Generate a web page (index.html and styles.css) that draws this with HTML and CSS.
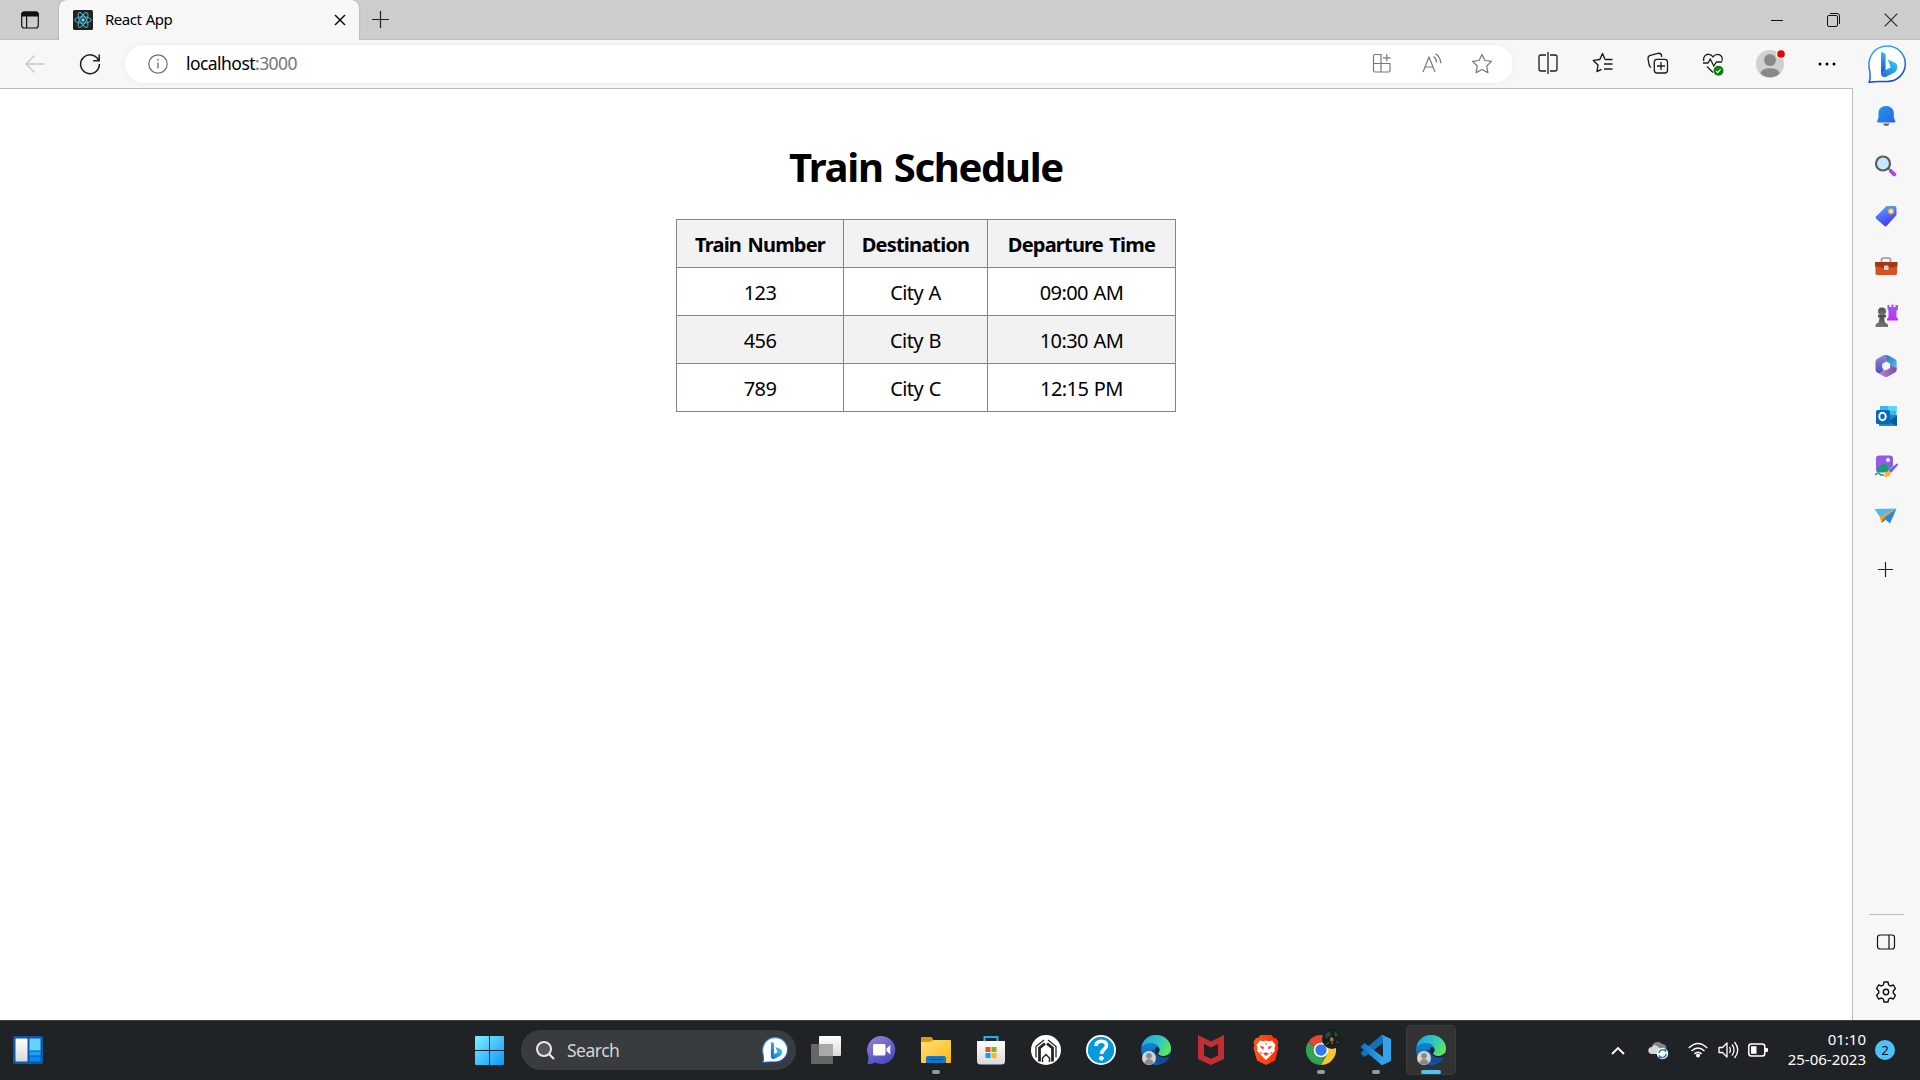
FILE: index.html
```html
<!DOCTYPE html>
<html lang="en">
<head>
<meta charset="utf-8">
<title>React App</title>
<link rel="stylesheet" href="styles.css">
</head>
<body>
<svg class="defs" width="0" height="0" aria-hidden="true">
  <defs>
    <linearGradient id="bingRing" x1="0" y1="0" x2="0.3" y2="1"><stop offset="0" stop-color="#2ab4f0"/><stop offset=".5" stop-color="#2b86ea"/><stop offset="1" stop-color="#1a49c8"/></linearGradient>
    <linearGradient id="bingStem" x1="0" y1="0" x2="0" y2="1"><stop offset="0" stop-color="#37b5f5"/><stop offset="1" stop-color="#1b4fd6"/></linearGradient>
    <linearGradient id="bingBowl" x1="1" y1="0" x2="0" y2="1"><stop offset="0" stop-color="#2fd6e8"/><stop offset="1" stop-color="#2065e0"/></linearGradient>
    <linearGradient id="blue" x1="0" y1="0" x2="1" y2="1"><stop offset="0" stop-color="#1b9de2"/><stop offset="1" stop-color="#2f62e8"/></linearGradient>
    <linearGradient id="tag" x1="0" y1="0" x2=".4" y2="1"><stop offset="0" stop-color="#5eb0ff"/><stop offset="1" stop-color="#4338f5"/></linearGradient>
    <linearGradient id="purple" x1="0" y1="0" x2="0" y2="1"><stop offset="0" stop-color="#a05cf0"/><stop offset="1" stop-color="#c32cf0"/></linearGradient>
    <linearGradient id="grey" x1="0" y1="0" x2="0" y2="1"><stop offset="0" stop-color="#4c4c4c"/><stop offset="1" stop-color="#777"/></linearGradient>
    <linearGradient id="win" gradientUnits="userSpaceOnUse" x1="0" y1="0" x2="29" y2="29"><stop offset="0" stop-color="#7df0ff"/><stop offset="1" stop-color="#0b98fa"/></linearGradient>
    <linearGradient id="folder" x1="0" y1="0" x2="1" y2="1"><stop offset="0" stop-color="#ffe07a"/><stop offset="1" stop-color="#fdb813"/></linearGradient>
    <linearGradient id="chat" x1="0" y1="0" x2=".6" y2="1"><stop offset="0" stop-color="#a583cf"/><stop offset=".5" stop-color="#6f66cf"/><stop offset="1" stop-color="#4a4fc2"/></linearGradient>
    <linearGradient id="edgeTop" x1="0" y1=".3" x2="1" y2=".7"><stop offset="0" stop-color="#1fa6de"/><stop offset=".5" stop-color="#2fc6c4"/><stop offset="1" stop-color="#63ea52"/></linearGradient>
    <linearGradient id="edgeMid" x1="0" y1="0" x2="0" y2="1"><stop offset="0" stop-color="#1391e0"/><stop offset="1" stop-color="#0b5cb8"/></linearGradient>
    <linearGradient id="brave" x1="0" y1="0" x2="1" y2="0"><stop offset="0" stop-color="#ff5a1c"/><stop offset="1" stop-color="#ff2a00"/></linearGradient>
    <linearGradient id="code" x1="0" y1="0" x2="1" y2="0"><stop offset="0" stop-color="#1173c0"/><stop offset="1" stop-color="#30a5f2"/></linearGradient>
    <linearGradient id="pane" x1="0" y1="0" x2="0" y2="1"><stop offset="0" stop-color="#fff"/><stop offset="1" stop-color="#d9d9d9"/></linearGradient>
    <linearGradient id="ribbonA" x1="0" y1="0" x2="1" y2="1"><stop offset="0" stop-color="#2f6fb5"/><stop offset="1" stop-color="#52bdf0"/></linearGradient>
    <linearGradient id="ribbonB" x1="0" y1="0" x2="0" y2="1"><stop offset="0" stop-color="#9a86dc"/><stop offset="1" stop-color="#4450b4"/></linearGradient>
    <linearGradient id="ribbonC" x1="0" y1="0" x2="1" y2="0"><stop offset="0" stop-color="#b387d6"/><stop offset="1" stop-color="#7b4f9e"/></linearGradient>
  </defs>
  <symbol id="bing" viewBox="0 0 38 38">
    <path d="M1 37.500C2.600 34 2.200 29.500 1.700 26C-1.500 13 6 1 19.500 1A17.800 17.800 0 0 1 37.300 19A17.800 17.800 0 0 1 19.500 36.500C14 36.800 7 35.800 1 37.500Z" fill="#fff" stroke="url(#bingRing)" stroke-width="1.500"/>
    <path d="M13 7l4.600 1.800V25L13 29.500Z" fill="url(#bingStem)"/>
    <path d="M19.700 14.500l8 3.500c3.200 3 1.500 8-1.500 9.800L17.500 32C14.500 32.800 12.500 30.500 13 27.500l9.800-5.200Z" fill="url(#bingBowl)"/>
  </symbol>
  <symbol id="edge" viewBox="0 0 30 30">
    <circle cx="15" cy="15" r="14.900" fill="url(#edgeMid)"/>
    <path d="M11.500 14C8 20 12 28.500 20 29c4-1 7-4 8.500-7.500C23 25.500 14 23 14.500 16Z" fill="#0e4e9c"/>
    <path d="M.5 12C2 4.500 8 .1 15 .1c8.500 0 15 6 15 13.400 0 5-4 7.500-8 7.500-3.500 0-5-1.300-5-2.400s1.600-1.600 1.600-3.900C18.600 11 15 8 10.500 8 6 8 2.500 9.500.5 12Z" fill="url(#edgeTop)"/>
    <path d="M14 15c0-2 1.300-3.200 2.800-2.800 1.300.8 1.800 1.600 1.800 2.600 0 2-1.600 2.700-1.600 3.800 0 1.100 1.700 2.400 5 2.400 2.600 0 5-.9 6.700-2.800l.7 1-1.300 2.600c-6 2.500-14 .2-14.100-6.800Z" fill="#1d2326"/>
    <circle cx="8" cy="23" r="7" fill="#d6d3d0"/><circle cx="8" cy="20.800" r="2.900" fill="#8c8987"/><path d="M3.500 28c.7-5.300 8.300-5.300 9 0-2.500 2.300-6.500 2.300-9 0Z" fill="#8c8987"/>
  </symbol>
</svg>

<header class="tabstrip">
  <div class="tab-actions">
    <svg width="20" height="20" viewBox="0 0 20 20"><rect x="1.700" y="2" width="16.600" height="16" rx="2.500" fill="none" stroke="#111" stroke-width="1.200"/><path d="M1.500 6.500V4Q1.500 1.500 4 1.500H16Q18.500 1.500 18.500 4V6.500ZM6 6h1.200v12H6Z" fill="#111"/></svg>
  </div>
  <div class="tab">
    <svg width="20" height="20" viewBox="0 0 20 20"><rect width="20" height="20" rx="1.500" fill="#222"/><g fill="none" stroke="#4fb8d4" stroke-width="1"><ellipse cx="10" cy="10" rx="8.300" ry="3.200"/><ellipse cx="10" cy="10" rx="8.300" ry="3.200" transform="rotate(60 10 10)"/><ellipse cx="10" cy="10" rx="8.300" ry="3.200" transform="rotate(120 10 10)"/></g><circle cx="10" cy="10" r="1.700" fill="#61dafb"/></svg>
    <span class="tab-title">React App</span>
    <svg width="12" height="12" viewBox="0 0 12 12"><path d="M1 1l10 10M11 1L1 11" stroke="#111" stroke-width="1.500"/></svg>
  </div>
  <svg class="new-tab" width="18" height="18" viewBox="0 0 18 18"><path d="M8.500 0v17M0 8.500h17" stroke="#222" stroke-width="1.200"/></svg>
  <div class="window-controls">
    <svg width="14" height="14" viewBox="0 0 14 14"><path d="M1 7.500h12" stroke="#111"/></svg>
    <svg width="14" height="14" viewBox="0 0 14 14"><g fill="none" stroke="#111"><rect x=".5" y="2.500" width="10" height="11" rx="1.500"/><path d="M3 .5h7Q12.500.5 12.500 3v8"/></g></svg>
    <svg width="14" height="14" viewBox="0 0 14 14"><path d="M.7.700l12.600 12.600M13.300.7L.7 13.300" stroke="#222" stroke-width="1.100"/></svg>
  </div>
</header>

<nav class="toolbar">
  <span class="nav-btn"><svg width="22" height="20" viewBox="0 0 22 20"><path d="M20.500 10H2M10.500 1.500L2 10l8.500 8.500" fill="none" stroke="#c8c8c8" stroke-width="1.300"/></svg></span>
  <span class="nav-btn"><svg width="22" height="22" viewBox="0 0 22 22"><path d="M20 8.500A9.400 9.400 0 1 0 20.400 11M20.200 1.500v6.200h-6" fill="none" stroke="#1c1c1c" stroke-width="1.500"/></svg></span>
  <div class="address">
    <svg width="20" height="20" viewBox="0 0 20 20"><circle cx="10" cy="10" r="9.200" fill="none" stroke="#6c6c6c" stroke-width="1.200"/><path d="M10 8.500v6" stroke="#6c6c6c" stroke-width="1.300"/><circle cx="10" cy="5.800" r=".9" fill="#6c6c6c"/></svg>
    <span class="url">localhost<span class="port">:3000</span></span>
    <div class="address-icons">
      <span class="cell"><svg width="20" height="20" viewBox="0 0 20 20"><g fill="none" stroke="#777" stroke-width="1.200"><path d="M9 10.500V1.500H3Q1.500 1.500 1.500 3v14.500Q1.500 19 3 19h13.500Q18 19 18 17.500v-7H1.500M9 10.500V19M14.800 1v7.600M11 4.800h7.600"/></g></svg></span>
      <span class="cell"><svg width="20" height="20" viewBox="0 0 20 20"><g fill="none" stroke="#777" stroke-width="1.200"><path d="M1 19L7 4l6 15M3 14h8M11.500 3.500q3 2 3.200 6M13.500.800q5 3 5.300 9.500"/></g></svg></span>
      <span class="cell"><svg width="22" height="22" viewBox="0 0 22 22"><path d="M11 1.500l2.900 6 6.600.9-4.800 4.600 1.200 6.600L11 16.500l-5.900 3.100 1.200-6.600L1.500 8.400l6.600-.9Z" fill="none" stroke="#777" stroke-width="1.200" stroke-linejoin="round"/></svg></span>
    </div>
  </div>
  <div class="tools">
    <span class="cell"><svg width="20" height="22" viewBox="0 0 20 22"><path d="M8 3H3Q1 3 1 5v12q0 2 2 2h5M12 3h5q2 0 2 2v12q0 2-2 2h-5M10 0v22" fill="none" stroke="#1c1c1c" stroke-width="1.300"/></svg></span>
    <span class="cell"><svg width="22" height="22" viewBox="0 0 22 22"><path d="M13 7.500L10.500 1.500 7.800 7.500 1.300 8.400 6 13 5 19.500l4.500-2.200M13 7.500h7.500M12 12h8.500M12 17h8.500" fill="none" stroke="#1c1c1c" stroke-width="1.400" stroke-linejoin="round"/></svg></span>
    <span class="cell"><svg width="22" height="22" viewBox="0 0 22 22"><g fill="none" stroke="#1c1c1c" stroke-width="1.300"><path d="M4 15.500Q2.500 14.500 2 12.500L1 6.500Q1 4 3.300 3.400L11 1.300q3-.4 3.600 2.200V5"/><rect x="7.300" y="7.300" width="13.200" height="13.700" rx="2.700"/><path d="M14 10v8M10 14h8"/></g></svg></span>
    <span class="cell"><svg width="22" height="24" viewBox="0 0 22 24"><path d="M1.600 9C.8 4.500 4 2 7 2.300c2 .2 3.300 1.500 4 2.500 1-1.300 2.400-2.500 4.500-2.500 3.500 0 5.700 3.200 4.600 6.700M1 11h5l2.300-4 3.500 7 2.700-4H20M5 14.500l6 6" fill="none" stroke="#1c1c1c" stroke-width="1.300"/><circle cx="16.500" cy="18.800" r="5" fill="#107c10"/><path d="M14 19l1.700 1.600 3-3.500" fill="none" stroke="#fff" stroke-width="1.300"/></svg></span>
  </div>
  <div class="profile"><svg width="32" height="32" viewBox="0 0 32 32"><circle cx="15" cy="17" r="14" fill="#d2d0ce"/><circle cx="15" cy="13" r="6" fill="#8a8886"/><path d="M5.500 26.500C6 19.500 24 19.500 24.500 26.500a14 14 0 0 1-19 0Z" fill="#8a8886"/><circle cx="26" cy="7" r="5" fill="#f7f7f7"/><circle cx="26" cy="7" r="3.800" fill="#e60000"/></svg></div>
  <div class="more"><svg width="18" height="4" viewBox="0 0 18 4"><circle cx="2" cy="2" r="1.500"/><circle cx="9" cy="2" r="1.500"/><circle cx="16" cy="2" r="1.500"/></svg></div>
  <svg class="bing-btn" width="38" height="38"><use href="#bing"/></svg>
</nav>

<div class="workspace">
  <main class="page">
    <h1>Train Schedule</h1>
    <table class="schedule">
      <colgroup><col class="c-number"><col class="c-dest"><col class="c-time"></colgroup>
      <thead><tr><th>Train Number</th><th>Destination</th><th>Departure Time</th></tr></thead>
      <tbody>
        <tr><td>123</td><td>City A</td><td>09:00 AM</td></tr>
        <tr><td>456</td><td>City B</td><td>10:30 AM</td></tr>
        <tr><td>789</td><td>City C</td><td>12:15 PM</td></tr>
      </tbody>
    </table>
  </main>
  <aside class="sidebar">
    <span class="side-btn"><svg width="24" height="24" viewBox="0 0 24 24"><path d="M9 19.500h6.500q-.5 2.500-3.200 2.500T9 19.500Z" fill="#666"/><path d="M12 2C7.500 2 4.500 5 4.500 9v4.500L3 17.500q0 1 1 1h16.500q1 0 1-1L19.800 13.500V9C19.800 5 16.500 2 12 2Z" fill="url(#blue)"/></svg></span>
    <span class="side-btn"><svg width="24" height="24" viewBox="0 0 24 24"><path d="M15 15.500l2.500-.5 5 5q-.5 2.500-2.800 2.500L15 18Z" fill="#c03cf0"/><path d="M13 13l4 4" stroke="#777" stroke-width="2"/><circle cx="9" cy="9.500" r="7" fill="#c4e8fb" stroke="#5c5c5c" stroke-width="2.200"/></svg></span>
    <span class="side-btn"><svg width="24" height="24" viewBox="0 0 24 24"><path d="M12.500 2H20q2.500 0 2.500 2.500v6.500L12.500 22q-1 .8-2 0L2 14.500q-.8-1 0-2Z" fill="url(#tag)"/><circle cx="17" cy="7.200" r="2.300" fill="#fff2c7" stroke="#f2bd22" stroke-width="1.400"/></svg></span>
    <span class="side-btn"><svg width="24" height="24" viewBox="0 0 24 24"><path d="M7.500 8V6q0-2 2-2h5q2 0 2 2v2" fill="none" stroke="#999" stroke-width="1.700"/><rect x="1.500" y="8" width="21.500" height="13" rx="1.700" fill="#d75220"/><path d="M1 8h22.500v4.500L14 14h-4L1 12.500Z" fill="#aa3513"/><rect x="10" y="11.500" width="4.500" height="4.500" rx=".7" fill="#cfcfcf"/></svg></span>
    <span class="side-btn"><svg width="24" height="24" viewBox="0 0 24 24"><path d="M13.500 1h2v2h2V.5h2V3h2V1H24v4.500l-1.500 1v6.500l1.500 2v1.500H13V15l1.500-2V6.500l-1-1Z" fill="url(#purple)"/><circle cx="8" cy="7.500" r="4" fill="url(#grey)"/><path d="M4 11h8v2.500h-2l1 5 3 2V23H1.500v-2.500l3-2 1.200-5H4Z" fill="url(#grey)"/></svg></span>
    <span class="side-btn"><svg width="24" height="24" viewBox="0 0 24 24"><path d="M9 1.700Q12 .3 15 1.700l6 3.300q1.700 1 1.700 3v6.500L15.500 11 12 7Z" fill="url(#ribbonA)"/><path d="M12 1Q10 1 8.500 1.800L3 5Q1.500 6 1.500 8v7.500q0 2 1.700 3L7 20.500 9.500 16 8 11l5-3.500Z" fill="url(#ribbonB)"/><path d="M22.700 14v1.500q0 2-1.700 3l-6.500 3.800q-2.500 1.200-5 0L5 19.500l7.500-4.500 3.500-4Z" fill="url(#ribbonC)"/><path d="M12.200 7.500l3.800 2.200v4.200l-3.800 2.300-3.800-2.300V9.700Z" fill="#f7f7f7"/></svg></span>
    <span class="side-btn"><svg width="24" height="24" viewBox="0 0 24 24"><path d="M6 2h16.500v10H6Z" fill="#37b9ed"/><path d="M14 2h8.500v5H14Z" fill="#53d7fa"/><path d="M5 11h18v10q0 1-1 1H5Z" fill="#1688d0"/><path d="M23 12L14 17l9 5Z" fill="#0a5b9e"/><rect x="2" y="6" width="14" height="14" rx="1.500" fill="#0868ba"/><ellipse cx="8.500" cy="12.500" rx="3.200" ry="3.700" fill="none" stroke="#fff" stroke-width="2"/></svg></span>
    <span class="side-btn"><svg width="24" height="24" viewBox="0 0 24 24"><rect x="2" y="1.500" width="17" height="17" rx="3" fill="#925be7"/><circle cx="14" cy="6" r="2" fill="#f6eaff"/><path d="M2.500 15L9 9.500q1-.7 2 0L17 15q-2 3-4.500 3H5q-2 0-2.500-3Z" fill="#1b9d70"/><path d="M.5 19H9l4 4H.5Z" fill="#f7f7f7"/><path d="M1 21q3-3 5-1 .8 2 4 .5" fill="none" stroke="#25aa76" stroke-width="1.700"/><path d="M14 16.500L22.500 9.500q2-.5 1.700 1.500L17 19Z" fill="#625ef0" stroke="#f7f7f7" stroke-width=".5"/><path d="M9.500 22.500q2-1 2-4l3.500-2 2 2.500q-1.500 5-7.500 3.500Z" fill="#f6b52c"/></svg></span>
    <span class="side-btn"><svg width="24" height="24" viewBox="0 0 24 24"><path d="M.5 5L22.500 4.500 6 13Z" fill="#48bdf5"/><path d="M22.500 4.500L5.500 12.500 7.500 19 10 14Z" fill="#f2a21a"/><path d="M22.500 4.500L9.500 14l6.500 5.500Z" fill="#2786e6"/><path d="M9.500 14l-2 5 4-3Z" fill="#9c670c"/></svg></span>
    <span class="side-btn side-add"><svg width="16" height="16" viewBox="0 0 16 16"><path d="M7.500 0v15M0 7.500h15" stroke="#222" stroke-width="1.200"/></svg></span>
    <div class="side-bottom">
      <span class="side-btn"><svg width="20" height="18" viewBox="0 0 20 18"><rect x="1.500" y="2" width="17" height="14" rx="2.500" fill="none" stroke="#111" stroke-width="1.200"/><path d="M13 2v14" stroke="#111" stroke-width="1.200"/></svg></span>
      <span class="side-btn"><svg width="22" height="22" viewBox="0 0 22 22"><path d="M9 1h4l.7 3 1.700 1 3-1 2 3.500L18.300 10v2l2.100 2.500-2 3.500-3-1-1.700 1-.7 3H9l-.7-3-1.700-1-3 1-2-3.500L3.700 12v-2L1.600 7.500l2-3.500 3 1 1.700-1Z" fill="none" stroke="#111" stroke-width="1.400" stroke-linejoin="round"/><circle cx="11" cy="11" r="2.700" fill="none" stroke="#111" stroke-width="1.400"/></svg></span>
    </div>
  </aside>
</div>

<footer class="taskbar">
  <div class="widgets"><svg width="30" height="28" viewBox="0 0 30 28"><rect width="30" height="28" rx="1.500" fill="#0c58ad"/><rect x="2.500" y="2.500" width="12" height="23" rx="1" fill="url(#pane)"/><path d="M16.500 2.500h11v12h-11Z" fill="#65d4fc"/><path d="M16.500 15.500h11v4h-11Z" fill="#1aa3fa"/><path d="M16.500 20.500h11v5h-11Z" fill="#0789ef"/></svg></div>
  <div class="apps">
    <span class="app"><svg width="29" height="29" viewBox="0 0 29 29"><path d="M0 1Q0 0 1 0h13v14H0ZM15 0h13q1 0 1 1v13H15ZM0 15h14v14H1q-1 0-1-1ZM15 15h14v13q0 1-1 1H15Z" fill="url(#win)"/></svg></span>
    <div class="search">
      <svg width="20" height="20" viewBox="0 0 20 20"><circle cx="9" cy="9" r="7" fill="#54575a" stroke="#e8e8e8" stroke-width="2"/><path d="M14 14l5 5" stroke="#e8e8e8" stroke-width="2.200"/></svg>
      <span>Search</span>
      <svg width="26" height="26"><use href="#bing"/></svg>
    </div>
    <span class="app"><svg width="30" height="28" viewBox="0 0 30 28"><rect x="8" width="22" height="20" rx="1" fill="url(#pane)"/><rect y="8" width="22" height="20" rx="1" fill="#777" fill-opacity=".8"/><path d="M8 8h14v12H8Z" fill="#a9a9a9"/></svg></span>
    <span class="app"><svg width="30" height="30" viewBox="0 0 30 30"><path d="M15.500 1A14 14 0 1 1 9 27.500Q5 29.500 1.500 29 3 25 2 20A14 14 0 0 1 15.500 1Z" fill="url(#chat)"/><rect x="7" y="9" width="12.500" height="11.500" rx="1.500" fill="#fff"/><path d="M20.500 13.500L24.300 10v9.500l-3.800-3.500Z" fill="#fff"/></svg></span>
    <span class="app running"><svg width="30" height="28" viewBox="0 0 30 28"><path d="M0 2Q0 1 1 1h9.500l2.500 4v4H0Z" fill="#e09c08"/><path d="M0 6h9l3.500-2H29q1 0 1 1v21q0 1-1 1H1q-1 0-1-1Z" fill="url(#folder)"/><path d="M5 27v-5q0-2 2-2h16q2 0 2 2v5Z" fill="#1475c9"/><path d="M8.500 23.500h13" stroke="#0e4c84"/></svg></span>
    <span class="app"><svg width="30" height="30" viewBox="0 0 30 30"><path d="M8.500 7V2h13v5" fill="none" stroke="#24b0ed" stroke-width="2"/><path d="M1 6h28v20q0 3.500-3.500 3.500h-21Q1 29.500 1 26Z" fill="url(#pane)"/><path d="M9.500 12h5v5h-5Z" fill="#f25022"/><path d="M15.500 12h5v5h-5Z" fill="#7fba00"/><path d="M9.500 18h5v5h-5Z" fill="#00a4ef"/><path d="M15.500 18h5v5h-5Z" fill="#ffb900"/></svg></span>
    <span class="app"><svg width="30" height="30" viewBox="0 0 30 30"><circle cx="15" cy="15" r="15" fill="#fff"/><g fill="none" stroke="#252525"><path d="M5 22.500V11.500L13 5M25 22.500V11.500L17 5" stroke-width="1.300"/><path d="M8.500 26.500V13L14 8.500M21.500 26.500V13L16 8.500" stroke-width="2.800"/><path d="M11.500 27v-4l3.500-3.500 3.500 3.500v4" stroke-width="1.500"/></g></svg></span>
    <span class="app"><svg width="30" height="30" viewBox="0 0 30 30"><circle cx="15" cy="15" r="15" fill="#fff"/><circle cx="15" cy="15" r="13.200" fill="#0799dc"/><path d="M10 11q.2-4.800 5.300-4.800t5.200 4.300c0 4-5 4-5 8.500" fill="none" stroke="#fff" stroke-width="3.600"/><circle cx="15.300" cy="23.300" r="2.400" fill="#fff"/></svg></span>
    <span class="app"><svg width="30" height="30"><use href="#edge"/></svg></span>
    <span class="app"><svg width="28" height="30" viewBox="0 0 28 30"><path d="M1 0l13 6.500L27 0v24L14 30 1 24ZM7 9v11.500l7 3.200 7-3.200V9l-7 3.500Z" fill="#c22e31" fill-rule="evenodd"/></svg></span>
    <span class="app"><svg width="26" height="30" viewBox="0 0 26 30"><path d="M7.500 0h11l2.500 3h2l2.500 4-1 3 1 3-3.500 12.500L13 30l-9-4.500L.5 13l1-3-1-3L3 3h2Z" fill="url(#brave)"/><path d="M7 5.500l3 .7 3-.7 3 .7 3-.7 3.500 4.500-1 3 .3 3-3.300 3.500L13 25l-5.500-5.500L4.200 16l.3-3-1-3Z" fill="#fff"/><path d="M6.500 11l4.500.7-.8 3.300ZM19.500 11l-4.500.7.8 3.300ZM10 18.500l3-1.300 3 1.300-3 2.500Z" fill="#fb421b"/><path d="M13 8v2M7 17l1.500 2M19 17l-1.500 2" stroke="#fb421b"/></svg></span>
    <span class="app running"><svg width="30" height="30" viewBox="0 0 30 30"><path d="M15 15L2 7.500A15 15 0 0 1 28 7.500H15Z" fill="#e64436"/><path d="M15 15L2 7.500A15 15 0 0 0 15 30l6.500-11.300Z" fill="#32a350"/><path d="M15 15V7.500h13A15 15 0 0 1 15 30l6.500-11.300Z" fill="#fdc62f"/><circle cx="15" cy="15" r="7.300" fill="#fff"/><circle cx="15" cy="15" r="5.700" fill="#3478e8"/></svg><svg class="avatar" width="20" height="20" viewBox="0 0 20 20"><circle cx="10" cy="10" r="10" fill="#13211f"/><path d="M3 5l5-3 1 4-5 4ZM12 2l5 4-4 2Z" fill="#29483f"/><path d="M4 16l3-3M14 12l3 2" stroke="#4f655f"/><path d="M8 9l2-1 1.500 2v2H8Z" fill="#a7774c"/><path d="M9 11.500h2V15H9Z" fill="#b3262a"/></svg></span>
    <span class="app running"><svg width="30" height="30" viewBox="0 0 30 30"><path d="M22 0v8L3.500 22 0 19v-1.500L20 .5Z" fill="#1272bc"/><path d="M22 30v-8L3.500 8 0 11v1.500L20 29.500Z" fill="url(#code)"/><path d="M21.500 0L30 4v22l-8.500 4Q20 29.500 20 28.500h2v-27h-2Q20 .5 21.500 0Z" fill="#30a4ee"/></svg></span>
    <span class="app active"><svg width="30" height="30"><use href="#edge"/></svg></span>
  </div>
  <div class="tray">
    <span class="tray-cell chevron"><svg width="14" height="9" viewBox="0 0 14 9"><path d="M1 8l6-6 6 6" fill="none" stroke="#fff" stroke-width="1.900"/></svg></span>
    <span class="tray-cell cloud"><svg width="22" height="20" viewBox="0 0 22 20"><path d="M5 6C6 2 12 .5 15 4c3 0 5 2 4 6l-3 3H5Z" fill="#858585"/><path d="M5 14C0 14 0 7 5 7c1-2.500 5-2 6 0l5 3-4 4Z" fill="#d6d6d6"/><circle cx="15.500" cy="13.500" r="5.700" fill="#fff"/><path d="M12 13a3.700 3.700 0 0 1 6.500-2v-2M19 14a3.700 3.700 0 0 1-6.500 2.300V18" fill="none" stroke="#1977c8" stroke-width="1.500"/></svg></span>
    <span class="tray-cell"><svg width="20" height="16" viewBox="0 0 20 16"><path d="M.8 6Q10-3 19.200 6M3.500 9q6.500-6.200 13 0M6.300 12q3.700-3.500 7.400 0" fill="none" stroke="#fff" stroke-width="1.400"/><circle cx="10" cy="13.500" r="2" fill="#fff"/></svg></span>
    <span class="tray-cell"><svg width="21" height="18" viewBox="0 0 21 18"><path d="M1 6.500h3.500L9 2v14l-4.500-4.500H1ZM11.500 6q1.800 3 0 6M14 3.500q4 5.500 0 11M16.500 1q6.500 8 0 16" fill="none" stroke="#fff" stroke-width="1.300" stroke-linejoin="round"/></svg></span>
    <span class="tray-cell"><svg width="20" height="14" viewBox="0 0 20 14"><rect x=".8" y="1" width="16" height="12" rx="2.500" fill="none" stroke="#fff" stroke-width="1.500"/><path d="M3 3.300h5.500v7.400H3ZM17 5h2q1 0 1 1v2q0 1-1 1h-2Z" fill="#fff"/></svg></span>
    <div class="clock"><span>01:10</span><span>25-06-2023</span></div>
    <span class="badge">2</span>
  </div>
</footer>
</body>
</html>
```
FILE: styles.css
```css
* { box-sizing: border-box; }

body {
  margin: 0;
  width: 1920px;
  height: 1080px;
  overflow: hidden;
  display: flex;
  flex-direction: column;
  background: #fff;
  color: #000;
  font-family: "Noto Sans", "Open Sans", sans-serif;
}

svg { display: block; flex: none; }
.defs { position: absolute; }

/* Tab strip */
.tabstrip {
  height: 40px;
  flex: none;
  display: flex;
  align-items: center;
  background: #cdcdcd;
  box-shadow: inset 0 -1px #bdbdbd;
}
.tab-actions { width: 59px; padding-left: 20px; }
.tab {
  width: 300px;
  height: 40px;
  display: flex;
  align-items: center;
  padding: 0 13px 0 14px;
  background: #f7f7f7;
  border-radius: 8px 8px 0 0;
  box-shadow: 0 0 2px #999;
  clip-path: inset(-3px -3px 0 -3px);
}
.tab-title { flex: 1; padding: 0 0 2px 12px; font-size: 15px; letter-spacing: -0.5px; word-spacing: 1px; }
.new-tab { margin-left: 13px; }
.window-controls { margin-left: auto; display: flex; gap: 43px; padding: 0 22px 1px 0; }

/* Toolbar */
.toolbar {
  height: 48px;
  flex: none;
  display: flex;
  align-items: center;
  background: #f7f7f7;
  padding-left: 7px;
}
.nav-btn { width: 55px; display: flex; justify-content: center; }
.address {
  width: 1388px;
  height: 38px;
  margin-left: 8px;
  padding: 0 6px 0 23px;
  display: flex;
  align-items: center;
  border-radius: 19px;
  background: #fff;
  box-shadow: 0 0 5px #eaeaea;
}
.url { padding: 0 0 2px 18px; font-size: 17.500px; letter-spacing: -0.55px; }
.port { color: #767676; }
.address-icons { display: flex; margin-left: auto; }
.cell { display: flex; justify-content: center; }
.address-icons .cell { width: 50px; }
.tools { display: flex; margin-left: 7px; }
.tools .cell { width: 55px; }
.profile { margin-left: 15px; padding-bottom: 2px; }
.more { width: 18px; margin-left: 31px; }
.bing-btn { margin-left: 32px; }

/* Workspace */
.workspace { flex: 1; min-height: 0; display: grid; grid-template-columns: 1853px 1fr; background: #f7f7f7; }
.page {
  background: #fff;
  border-top: 1px solid #bdbdbd;
  border-right: 1px solid #bdbdbd;
  display: flex;
  flex-direction: column;
  align-items: center;
}
h1 { margin: 51px 0 25px; font-size: 40px; line-height: 54px; letter-spacing: -1.300px; word-spacing: 2px; }
.schedule { width: 500px; border-collapse: collapse; table-layout: fixed; font-size: 20px; }
.c-number { width: 167px; }
.c-dest { width: 144px; }
.c-time { width: 188px; }
.schedule th, .schedule td {
  height: 48px;
  padding: 2px 0 0;
  border: 1px solid #7a868c;
  text-align: center;
  line-height: 27px;
  letter-spacing: -0.6px;
  word-spacing: 1px;
}
.schedule th { background: #f2f2f2; letter-spacing: -0.8px; word-spacing: 2px; }
.schedule tbody tr:nth-child(even) { background: #f2f2f2; }

/* Sidebar */
.sidebar { display: flex; flex-direction: column; align-items: center; padding: 3px 1px 0 0; }
.side-btn { height: 50px; display: flex; align-items: center; justify-content: center; }
.side-add { padding-top: 8px; }
.side-bottom { margin-top: auto; width: 35px; border-top: 1px solid #bdbdbd; padding: 2px 0 3px; }

/* Taskbar */
.taskbar {
  height: 60px;
  flex: none;
  display: flex;
  align-items: center;
  background: #202325;
  box-shadow: inset 0 1px #3b3e40;
  color: #fff;
}
.widgets { width: 462px; padding-left: 13px; }
.apps { display: flex; align-items: center; }
.app {
  position: relative;
  width: 50px;
  height: 50px;
  margin: 0 2.500px;
  display: flex;
  align-items: center;
  justify-content: center;
  border-radius: 5px;
}
.search {
  width: 275px;
  height: 40px;
  margin: 0 2px 0 4px;
  padding: 0 8px 0 14px;
  border-radius: 20px;
  background: #393c3f;
  display: flex;
  align-items: center;
  justify-content: space-between;
  font-size: 17.500px;
  letter-spacing: -0.5px;
  color: #d5d5d5;
}
.search span { flex: 1; padding-left: 12px; }
.active { background: #323232; box-shadow: inset 0 0 0 1px #3c3c3c; }
.running::after, .active::after {
  content: "";
  position: absolute;
  bottom: 1px;
  width: 8px;
  height: 4px;
  border-radius: 2px;
  background: #9b9b9b;
}
.active::after { width: 20px; background: #4cc2ff; }
.avatar { position: absolute; right: 4px; top: 4px; }

.tray { margin-left: auto; display: flex; align-items: center; padding-right: 25px; }
.tray-cell { width: 30px; display: flex; justify-content: center; }
.chevron { width: 40px; }
.cloud { width: 40px; margin-right: 5px; }
.clock {
  width: 93px;
  padding-bottom: 3px;
  display: flex;
  flex-direction: column;
  align-items: flex-end;
  font-size: 15px;
  line-height: 20px;
}
.badge {
  width: 20px;
  height: 20px;
  margin-left: 9px;
  border-radius: 50%;
  background: #4cc2ff;
  color: #111;
  font-size: 13px;
  line-height: 20px;
  text-align: center;
}
```
